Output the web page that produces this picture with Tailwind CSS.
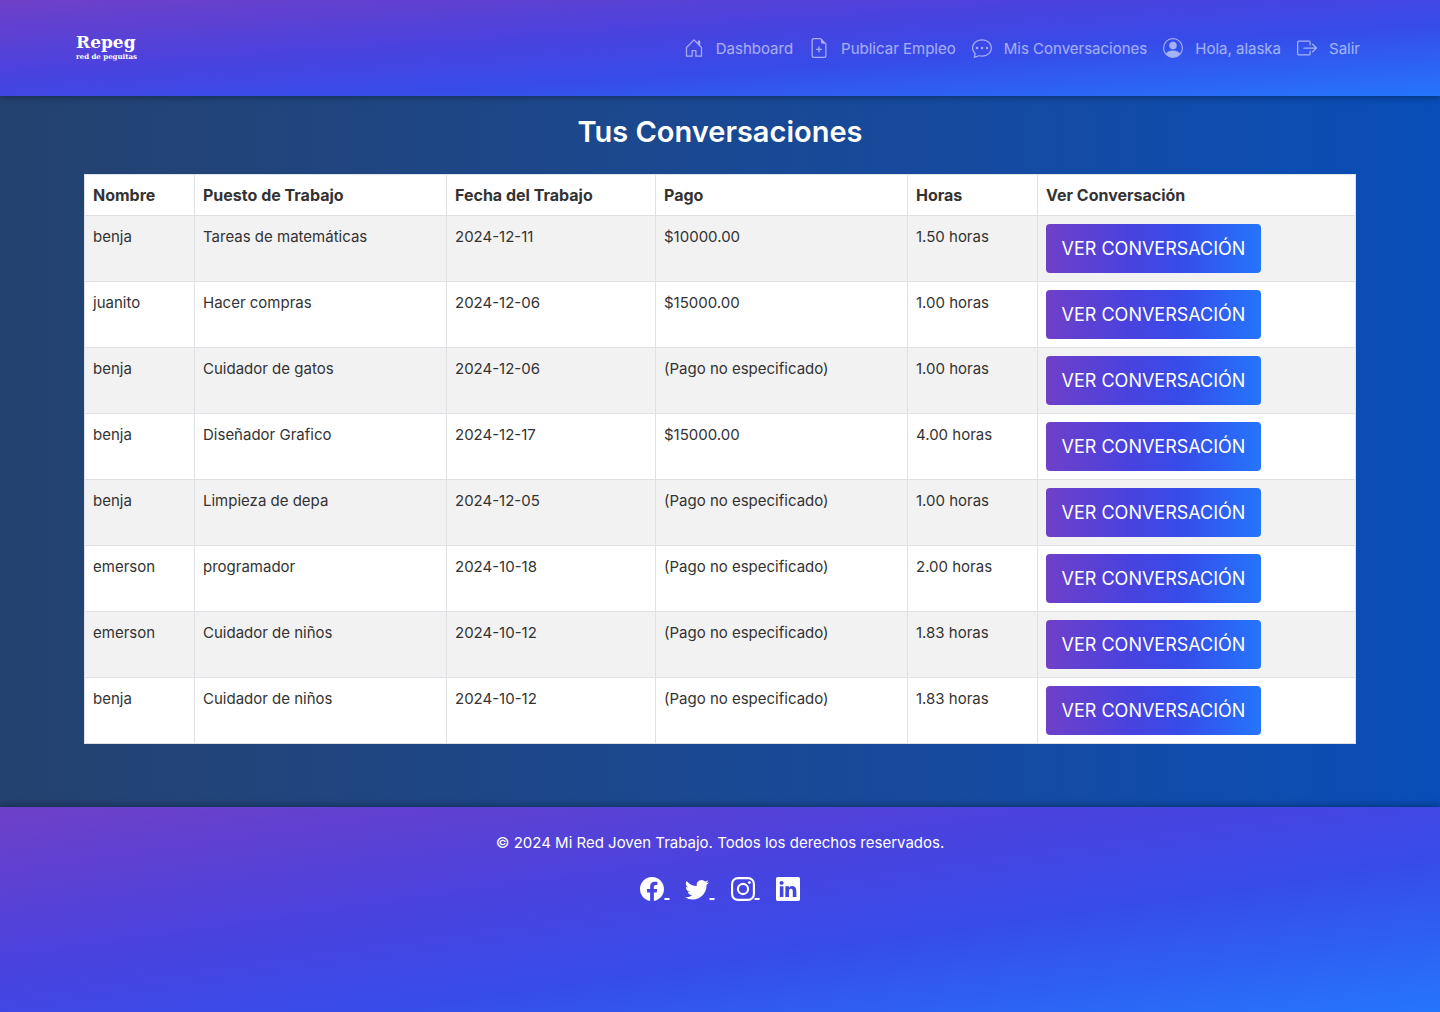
<!DOCTYPE html>
<html lang="es">
<head>
<meta charset="utf-8">
<meta name="viewport" content="width=device-width, initial-scale=1">
<title>Tus Conversaciones</title>
<script src="https://cdn.jsdelivr.net/npm/@tailwindcss/browser@4"></script>
</head>
<body class="flex min-h-screen flex-col bg-linear-to-r from-[#24426f] to-[#084db8] font-['Inter',sans-serif] text-[15px] leading-6 text-[#333]">

<header class="z-10 flex h-24 items-center justify-between bg-[linear-gradient(to_bottom_right,#6f40c8,#4a42de_38%,#374be9_62%,#2575fc)] pr-20 pl-19 shadow-[0_2px_6px_rgba(0,0,0,0.3)]">
  <a href="#" class="flex flex-col pb-1 font-['DejaVu_Serif',serif] font-bold text-white">
    <span class="text-[17px] leading-5">Repeg</span>
    <span class="text-[7px] leading-[9px]">red de peguitas</span>
  </a>
  <nav class="flex items-center gap-4 pt-0.5 text-white/55">
    <a href="#" class="flex items-center gap-3">
      <svg class="mb-0.5 size-5" viewBox="0 0 16 16" fill="currentColor"><path d="M8.354 1.146a.5.5 0 0 0-.708 0l-6 6A.5.5 0 0 0 1.5 7.5v7a.5.5 0 0 0 .5.5h4.500a.5.5 0 0 0 .5-.5v-4h2v4a.5.5 0 0 0 .5.5H14a.5.5 0 0 0 .5-.5v-7a.5.5 0 0 0-.146-.354L13 5.793V2.5a.5.5 0 0 0-.5-.5h-1a.5.5 0 0 0-.5.5v1.293zM2.5 14V7.707l5.5-5.5 5.5 5.5V14H10v-4a.5.5 0 0 0-.5-.5h-3a.5.5 0 0 0-.5.5v4z"/></svg>
      <span>Dashboard</span>
    </a>
    <a href="#" class="flex items-center gap-3">
      <svg class="mb-0.5 size-5" viewBox="0 0 16 16" fill="currentColor"><path d="M8 6.5a.5.5 0 0 1 .5.5v1.5H10a.5.5 0 0 1 0 1H8.5V11a.5.5 0 0 1-1 0V9.5H6a.5.5 0 0 1 0-1h1.5V7a.5.5 0 0 1 .5-.5"/><path d="M14 4.5V14a2 2 0 0 1-2 2H4a2 2 0 0 1-2-2V2a2 2 0 0 1 2-2h5.5zm-3 0A1.5 1.5 0 0 1 9.5 3V1H4a1 1 0 0 0-1 1v12a1 1 0 0 0 1 1h8a1 1 0 0 0 1-1V4.5z"/></svg>
      <span>Publicar Empleo</span>
    </a>
    <a href="#" class="flex items-center gap-3">
      <svg class="mb-0.5 size-5" viewBox="0 0 16 16" fill="currentColor"><path d="M5 8a1 1 0 1 1-2 0 1 1 0 0 1 2 0m4 0a1 1 0 1 1-2 0 1 1 0 0 1 2 0m3 1a1 1 0 1 0 0-2 1 1 0 0 0 0 2"/><path d="m2.165 15.803.02-.004c1.83-.363 2.948-.842 3.468-1.105A9 9 0 0 0 8 15c4.418 0 8-3.134 8-7s-3.582-7-8-7-8 3.134-8 7c0 1.76.743 3.37 1.97 4.6a10.4 10.4 0 0 1-.524 2.318l-.003.011a11 11 0 0 1-.244.637c-.079.186.074.394.273.362a22 22 0 0 0 .693-.125m.8-3.108a1 1 0 0 0-.287-.801C1.618 10.83 1 9.468 1 8c0-3.192 3.004-6 7-6s7 2.808 7 6-3.004 6-7 6a8 8 0 0 1-2.088-.272 1 1 0 0 0-.711.074c-.387.196-1.24.57-2.634.893a11 11 0 0 0 .398-2"/></svg>
      <span>Mis Conversaciones</span>
    </a>
    <a href="#" class="flex items-center gap-3">
      <svg class="mb-0.5 size-5" viewBox="0 0 16 16" fill="currentColor"><path d="M11 6a3 3 0 1 1-6 0 3 3 0 0 1 6 0"/><path fill-rule="evenodd" d="M0 8a8 8 0 1 1 16 0A8 8 0 0 1 0 8m8-7a7 7 0 0 0-5.468 11.37C3.242 11.226 4.805 10 8 10s4.757 1.225 5.468 2.37A7 7 0 0 0 8 1"/></svg>
      <span>Hola, alaska</span>
    </a>
    <a href="#" class="flex items-center gap-3">
      <svg class="mb-0.5 size-5" viewBox="0 0 16 16" fill="currentColor"><path d="M10 12.5a.5.5 0 0 1-.5.5h-8a.5.5 0 0 1-.5-.5v-9a.5.5 0 0 1 .5-.5h8a.5.5 0 0 1 .5.5v2a.5.5 0 0 0 1 0v-2A1.5 1.5 0 0 0 9.5 2h-8A1.5 1.5 0 0 0 0 3.5v9A1.5 1.5 0 0 0 1.5 14h8a1.5 1.5 0 0 0 1.5-1.5v-2a.5.5 0 0 0-1 0z"/><path d="M15.854 8.354a.5.5 0 0 0 0-.708l-3-3a.5.5 0 0 0-.708.708L14.293 7.5H5.5a.5.5 0 0 0 0 1h8.793l-2.147 2.146a.5.5 0 0 0 .708.708z"/></svg>
      <span>Salir</span>
    </a>
  </nav>
</header>

<main class="px-21 pt-4 pb-[63px]">
  <h1 class="mb-[22px] text-center text-[29px] leading-10 font-semibold text-white">Tus Conversaciones</h1>
  <table class="w-full table-fixed border-collapse bg-white text-left [&_td]:border [&_td]:border-[#dee2e6] [&_td]:p-2 [&_td]:align-top [&_td]:leading-[26px] [&_th]:border [&_th]:border-[#dee2e6] [&_th]:p-2 [&_th]:text-base">
    <colgroup><col class="w-[110px]"><col class="w-[252px]"><col class="w-[209px]"><col class="w-[252px]"><col class="w-[130px]"><col></colgroup>
    <thead><tr><th>Nombre</th><th>Puesto de Trabajo</th><th>Fecha del Trabajo</th><th>Pago</th><th>Horas</th><th>Ver Conversación</th></tr></thead>
    <tbody id="rows" class="[&>tr:nth-child(odd)]:bg-[#f2f2f2]"></tbody>
  </table>
</main>

<footer class="z-10 flex-1 bg-[linear-gradient(to_bottom_right,#6f40c8,#4a42de_38%,#374be9_62%,#2575fc)] pt-6 text-center text-white shadow-[0_-2px_6px_rgba(0,0,0,0.3)]">
  <p class="mb-4">© 2024 Mi Red Joven Trabajo. Todos los derechos reservados.</p>
  <div class="flex justify-center gap-4">
    <a href="#" aria-label="Facebook" class="flex whitespace-pre"><svg class="mt-1.5 size-6" viewBox="0 0 16 16" fill="currentColor"><path d="M16 8.049c0-4.446-3.582-8.05-8-8.05C3.58 0-.002 3.603-.002 8.05c0 4.017 2.926 7.347 6.75 7.951v-5.625h-2.03V8.05H6.75V6.275c0-2.017 1.195-3.131 3.022-3.131.876 0 1.791.157 1.791.157v1.98h-1.009c-.993 0-1.303.621-1.303 1.258v1.51h2.218l-.354 2.326H9.25V16c3.824-.604 6.75-3.934 6.75-7.951"/></svg><span class="mt-1 text-lg leading-8 underline decoration-2"> </span></a>
    <a href="#" aria-label="Twitter" class="flex whitespace-pre"><svg class="mt-1.5 size-6" viewBox="0 0 16 16" fill="currentColor"><path d="M5.026 15c6.038 0 9.341-5.003 9.341-9.334q.002-.211-.006-.422A6.7 6.7 0 0 0 16 3.542a6.7 6.7 0 0 1-1.889.518 3.3 3.3 0 0 0 1.447-1.817 6.5 6.5 0 0 1-2.087.793A3.286 3.286 0 0 0 7.875 6.03a9.32 9.32 0 0 1-6.767-3.429 3.29 3.29 0 0 0 1.018 4.382A3.3 3.3 0 0 1 .64 6.575v.045a3.29 3.29 0 0 0 2.632 3.218 3.2 3.2 0 0 1-.865.115 3 3 0 0 1-.614-.057 3.28 3.28 0 0 0 3.067 2.277A6.6 6.6 0 0 1 .78 13.58a6 6 0 0 1-.78-.045A9.34 9.34 0 0 0 5.026 15"/></svg><span class="mt-1 text-lg leading-8 underline decoration-2"> </span></a>
    <a href="#" aria-label="Instagram" class="flex whitespace-pre"><svg class="mt-1.5 size-6" viewBox="0 0 16 16" fill="none" stroke="currentColor" stroke-width="1.44"><rect x=".72" y=".72" width="14.56" height="14.56" rx="4"/><circle cx="8" cy="8" r="3.39"/><circle cx="12.27" cy="3.73" r=".96" fill="currentColor" stroke="none"/></svg><span class="mt-1 text-lg leading-8 underline decoration-2"> </span></a>
    <a href="#" aria-label="LinkedIn" class="flex"><svg class="mt-1.5 size-6" viewBox="0 0 16 16" fill="currentColor"><path d="M0 1.146C0 .513.526 0 1.175 0h13.65C15.474 0 16 .513 16 1.146v13.708c0 .633-.526 1.146-1.175 1.146H1.175C.526 16 0 15.487 0 14.854zm4.943 12.248V6.169H2.542v7.225zm-1.2-8.212c.837 0 1.358-.554 1.358-1.248-.015-.709-.52-1.248-1.342-1.248S2.4 3.226 2.4 3.934c0 .694.521 1.248 1.327 1.248zm4.908 8.212V9.359c0-.216.016-.432.08-.586.173-.431.568-.878 1.232-.878.869 0 1.216.662 1.216 1.634v3.865h2.401V9.25c0-2.22-1.184-3.252-2.764-3.252-1.274 0-1.845.7-2.165 1.193v.025h-.016l.016-.025V6.169h-2.4c.03.678 0 7.225 0 7.225z"/></svg></a>
  </div>
</footer>

<script>
const rows = [
  ["benja", "Tareas de matemáticas", "2024-12-11", "$10000.00", "1.50 horas"],
  ["juanito", "Hacer compras", "2024-12-06", "$15000.00", "1.00 horas"],
  ["benja", "Cuidador de gatos", "2024-12-06", "(Pago no especificado)", "1.00 horas"],
  ["benja", "Diseñador Grafico", "2024-12-17", "$15000.00", "4.00 horas"],
  ["benja", "Limpieza de depa", "2024-12-05", "(Pago no especificado)", "1.00 horas"],
  ["emerson", "programador", "2024-10-18", "(Pago no especificado)", "2.00 horas"],
  ["emerson", "Cuidador de niños", "2024-10-12", "(Pago no especificado)", "1.83 horas"],
  ["benja", "Cuidador de niños", "2024-10-12", "(Pago no especificado)", "1.83 horas"]
];
document.getElementById("rows").innerHTML = rows.map(r =>
  `<tr>${r.map(c => `<td>${c}</td>`).join("")}<td><a href="#" class="flex h-[49px] w-[215px] items-center justify-center rounded bg-[linear-gradient(to_right,#6f40c8,#4a42de_38%,#374be9_62%,#2575fc)] text-lg text-white">VER CONVERSACIÓN</a></td></tr>`
).join("");
</script>
</body>
</html>
